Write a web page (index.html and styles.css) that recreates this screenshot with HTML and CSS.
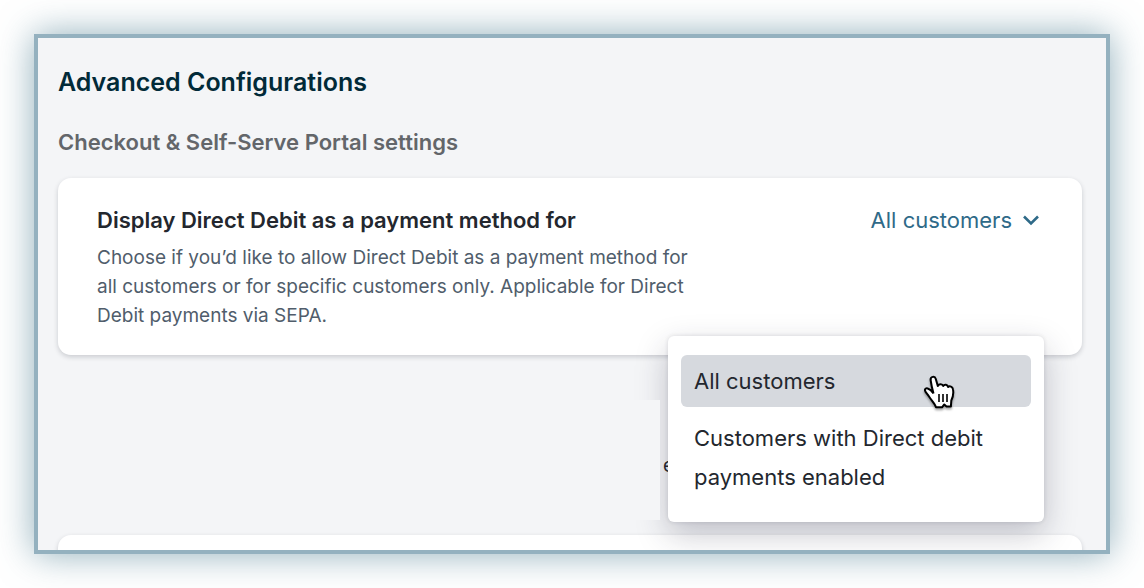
FILE: index.html
```html
<!DOCTYPE html>
<html lang="en">
<head>
    <meta charset="UTF-8">
    <meta name="viewport" content="width=device-width, initial-scale=1.0">
    <title>Advanced Configurations</title>
    <link rel="stylesheet" href="styles.css">
</head>
<body>
    <main class="frame">
        <h1>Advanced Configurations</h1>
        <h2>Checkout &amp; Self-Serve Portal settings</h2>

        <section class="card">
            <div class="card-text">
                <h3 id="debit-label">Display Direct Debit as a payment method for</h3>
                <p>Choose if you’d like to allow Direct Debit as a payment method for all customers or for specific customers only. Applicable for Direct Debit payments via SEPA.</p>
            </div>
            <div class="dropdown">
                <button type="button" class="dropdown-toggle" aria-haspopup="menu" aria-expanded="true">
                    All customers
                    <svg class="chevron" viewBox="0 0 16 16" aria-hidden="true">
                        <path d="M1 4.500 8 11.500l7-7"/>
                    </svg>
                </button>
                <div class="menu" role="menu" aria-labelledby="debit-label">
                    <button type="button" class="menu-item selected" role="menuitem">All customers</button>
                    <button type="button" class="menu-item" role="menuitem">Customers with Direct debit payments enabled</button>
                    <svg class="pointer" viewBox="0 0 32 36" aria-hidden="true">
                        <path class="hand" d="M9.500 18.500 C8.500 15 7.300 10 6.600 5 C6.300 1.500 10.800 0.500 11.800 4 L13.800 11 C15 8.500 18.500 8.700 19.200 11 C20.500 9 23.500 9.500 24.100 12 C25.600 10.700 28.600 11.500 29 14.400 C30 20 28.800 22.500 27.300 25.500 L26.900 31.500 L22.500 31.500 L20.300 29.500 L18 32.300 L12 32.300 C11 28.500 7.500 25.500 5 21.500 C3.500 19 0.900 17 0.900 15 C1 12.300 5.500 12.500 9.500 18.500"/>
                        <path class="fingers" d="M15 19v8M19 19v8M23 19v8"/>
                    </svg>
                </div>
            </div>
        </section>

        <div class="spacer-row">
            <div class="blank"></div>
            <span>e</span>
        </div>

        <section class="card card-next"></section>
    </main>
</body>
</html>
```
FILE: styles.css
```css
* {
    box-sizing: border-box;
}

body {
    margin: 0;
    padding: 34px;
    background-color: white;
    font-family: Inter, "Liberation Sans", sans-serif;
    color: #23272e;
}

.frame {
    height: calc(100vh - 68px);
    padding: 24px 24px 0 20px;
    overflow: hidden;
    background-color: #f4f5f7;
    border: 4px solid #94b1bf;
    box-shadow: 0 0 34px rgba(68, 120, 140, 0.6);
}

h1,
h2,
h3,
p {
    margin: 0;
}

h1 {
    font-size: 25px;
    font-weight: 600;
    line-height: 40px;
    color: #012a38;
}

h2 {
    margin: 24px 0 20px;
    font-size: 22px;
    font-weight: 600;
    line-height: 32px;
    color: #63666a;
}

.card {
    display: flex;
    justify-content: space-between;
    align-items: flex-start;
    padding: 24px 39px 25px;
    background-color: white;
    border-radius: 13px;
    box-shadow: 0 2px 5px rgba(35, 39, 56, 0.2);
}

.card-text {
    max-width: 605px;
}

h3 {
    margin-bottom: 5px;
    font-size: 22px;
    font-weight: 600;
    line-height: 36px;
}

.card-text p {
    font-size: 19px;
    line-height: 29px;
    color: #505d6b;
}

.dropdown {
    position: relative;
}

.dropdown-toggle {
    display: flex;
    align-items: center;
    gap: 11px;
    padding: 0 4px;
    border: none;
    background: none;
    font: inherit;
    font-size: 22px;
    line-height: 36px;
    color: #2f6a88;
    cursor: pointer;
}

.chevron {
    width: 16px;
    height: 16px;
    fill: none;
    stroke: currentColor;
    stroke-width: 2.6;
}

.menu {
    position: absolute;
    top: 134px;
    right: -1px;
    z-index: 1;
    width: 376px;
    padding: 19px 13px;
    background-color: white;
    border-radius: 6px;
    box-shadow: 0 0 4px rgba(35, 35, 60, 0.14), 0 12px 32px rgba(35, 35, 60, 0.25);
}

.menu-item {
    display: block;
    width: 100%;
    padding: 7px 13px 6px;
    border: none;
    border-radius: 6px;
    background: none;
    font: inherit;
    font-size: 22px;
    line-height: 39px;
    color: #23272e;
    text-align: left;
    cursor: pointer;
}

.menu-item.selected {
    margin-bottom: 5px;
    background-color: #d6d9de;
}

.pointer {
    position: absolute;
    top: 39px;
    right: 88px;
    width: 32px;
    height: 36px;
    filter: drop-shadow(0 2px 1px rgba(0, 0, 0, 0.35));
}

.hand {
    fill: white;
    stroke: black;
    stroke-width: 2;
    stroke-linejoin: round;
}

.fingers {
    fill: none;
    stroke: black;
    stroke-width: 1.6;
}

.spacer-row {
    display: flex;
    align-items: center;
    gap: 3px;
    margin: 45px 0 15px -20px;
    font-size: 19px;
}

.spacer-row span {
    padding-top: 10px;
}

.blank {
    position: relative;
    z-index: 2;
    width: 622px;
    height: 120px;
    background-color: #f4f5f7;
}

.card-next {
    min-height: 120px;
}
```
